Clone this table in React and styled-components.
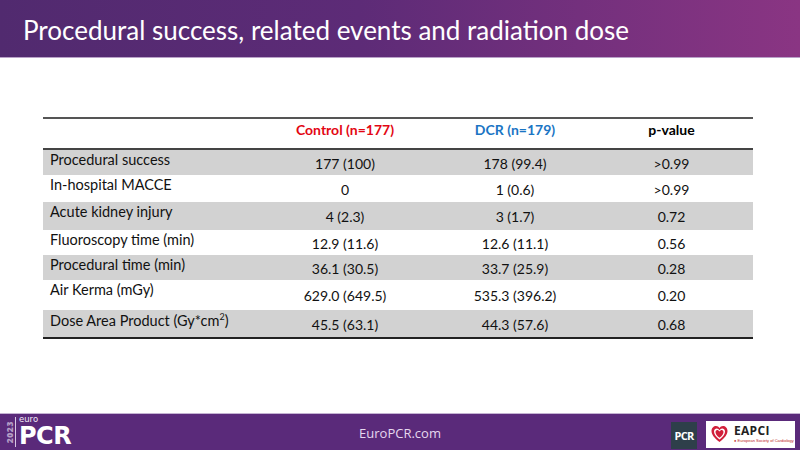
import React from "react";
import styled, { createGlobalStyle } from "styled-components";

const Global = createGlobalStyle`
  html, body { margin: 0; padding: 0; background: #fff; }
  body { width: 800px; height: 450px; overflow: hidden; font-family: Lato, "Open Sans", sans-serif; }
`;

const Slide = styled.div`
  width: 800px;
  height: 450px;
  display: flex;
  flex-direction: column;
  background: #fff;
`;

const Header = styled.header`
  height: 58px;
  flex: none;
  display: flex;
  align-items: center;
  padding-left: 23px;
  background: linear-gradient(90deg, #512a6f 0%, #5d2b77 45%, #8a3583 100%);
  border-bottom: 1px solid #b9a2c8;
  box-sizing: border-box;
`;

const Title = styled.h1`
  margin: 0;
  margin-top: 2px;
  color: #fff;
  font-family: Lato, "Open Sans", sans-serif;
  font-weight: 400;
  font-size: 26px;
`;

const Main = styled.main`
  flex: 1;
  padding: 59px 47px 0 43px;
`;

const Table = styled.div`
  width: 710px;
  border-top: 2px solid #555;
  border-bottom: 2px solid #222;
`;

const Row = styled.div`
  display: grid;
  grid-template-columns: 207px 190px 150px 163px;
  height: ${(p) => p.h}px;
  background: ${(p) => (p.shade ? "#d2d2d2" : "#fff")};
  border-bottom: ${(p) => (p.head ? "2px solid #444" : "none")};
  box-sizing: border-box;
`;

const Label = styled.div`
  padding: 1px 0 0 7px;
  font-size: 14.5px;
  color: #111;
  white-space: nowrap;
`;

const Sup = styled.sup`
  font-size: 9px;
`;

const Cell = styled.div`
  display: flex;
  align-items: center;
  justify-content: center;
  padding-top: 1px;
  font-size: 14px;
  color: #111;
  white-space: nowrap;
`;

const HeadCell = styled(Cell)`
  font-weight: 700;
  color: ${(p) => p.color || "#000"};
  padding-top: 0;
  padding-bottom: 8px;
`;

const Footer = styled.footer`
  height: 37px;
  flex: none;
  background: #5a2a7a;
  border-top: 1px solid #c4b2d2;
  display: grid;
  grid-template-columns: 1fr auto 1fr;
  align-items: center;
  box-sizing: border-box;
`;

const LeftLogo = styled.div`
  display: flex;
  align-items: center;
  padding-left: 4px;
  height: 100%;
`;

const YearBox = styled.div`
  height: 30px;
  width: 11px;
  display: flex;
  align-items: center;
  justify-content: center;
  margin-right: 3px;
  border-right: 1px solid #d8c8e4;
`;

const Year = styled.div`
  writing-mode: vertical-rl;
  transform: rotate(180deg);
  font-family: "Open Sans", sans-serif;
  font-weight: 800;
  font-size: 8.5px;
  letter-spacing: 0.6px;
  color: #b59fc6;
  line-height: 10px;
`;

const Brand = styled.div`
  align-self: flex-start;
  display: flex;
  flex-direction: column;
  color: #fff;
`;

const Euro = styled.span`
  font-family: "DejaVu Sans", sans-serif;
  font-size: 8.5px;
  line-height: 10px;
  color: #f2ebf7;
`;

const PcrBig = styled.span`
  font-family: "DejaVu Sans", sans-serif;
  font-weight: 700;
  font-size: 24px;
  line-height: 25px;
  letter-spacing: -0.5px;
`;

const Site = styled.div`
  color: #e6d8ef;
  font-family: "Open Sans", sans-serif;
  font-size: 13px;
  padding-top: 2px;
`;

const RightLogos = styled.div`
  display: flex;
  justify-content: flex-end;
  align-items: center;
  gap: 9px;
  padding-right: 5px;
`;

const PcrSquare = styled.div`
  width: 26px;
  height: 27px;
  background: #2e3f4a;
  color: #fff;
  display: flex;
  align-items: center;
  justify-content: center;
  font-family: "Open Sans", sans-serif;
  font-weight: 700;
  font-size: 11px;
  letter-spacing: -0.8px;
  margin-top: 6px;
`;

const EapciBox = styled.div`
  width: 89px;
  height: 27px;
  background: #fff;
  display: flex;
  align-items: center;
  padding-left: 5px;
  box-sizing: border-box;
  gap: 6px;
  margin-top: 4px;
`;

const EapciText = styled.div`
  display: flex;
  flex-direction: column;
  line-height: 1;
`;

const EapciName = styled.span`
  font-family: "Open Sans", sans-serif;
  font-weight: 700;
  font-size: 12px;
  color: #222;
  letter-spacing: 0.3px;
`;

const EapciSub = styled.span`
  font-family: "Liberation Sans", sans-serif;
  font-size: 4px;
  color: #b22;
  margin-top: 2px;
  white-space: nowrap;
`;

const rows = [
  ["Procedural success", "177 (100)", "178 (99.4)", ">0.99", 25],
  ["In-hospital MACCE", "0", "1 (0.6)", ">0.99", 27],
  ["Acute kidney injury", "4 (2.3)", "3 (1.7)", "0.72", 28],
  ["Fluoroscopy time (min)", "12.9 (11.6)", "12.6 (11.1)", "0.56", 25],
  ["Procedural time (min)", "36.1 (30.5)", "33.7 (25.9)", "0.28", 25],
  ["Air Kerma (mGy)", "629.0 (649.5)", "535.3 (396.2)", "0.20", 30],
  ["Dose Area Product (Gy*cm", "45.5 (63.1)", "44.3 (57.6)", "0.68", 27, true],
];

function Heart() {
  return (
    <svg width="17" height="18" viewBox="0 0 17 18">
      <path d="M8.5 17 C3 12.5 0.5 9.5 0.5 6 C0.5 3 2.7 1 5 1 C6.6 1 7.8 1.9 8.5 3 C9.2 1.9 10.4 1 12 1 C14.3 1 16.5 3 16.5 6 C16.5 9.5 14 12.5 8.5 17 Z" fill="#d11f3a" />
      <path d="M8.5 14.5 C4.5 11.3 3 9 3 6.6 C3 4.6 4.4 3.4 5.8 3.4 C7 3.4 7.9 4.2 8.5 5.3 C9.1 4.2 10 3.4 11.2 3.4 C12.6 3.4 14 4.6 14 6.6 C14 9 12.5 11.3 8.5 14.5 Z" fill="#fff" />
      <path d="M8.5 12.8 C5.6 10.5 4.5 8.7 4.5 7 C4.5 5.7 5.4 5 6.3 5 C7.2 5 7.9 5.6 8.5 6.5 C9.1 5.6 9.8 5 10.7 5 C11.6 5 12.5 5.7 12.5 7 C12.5 8.7 11.4 10.5 8.5 12.8 Z" fill="#d11f3a" />
    </svg>
  );
}

export default function App() {
  return (
    <>
      <Global />
      <Slide>
        <Header>
          <Title>Procedural success, related events and radiation dose</Title>
        </Header>
        <Main>
          <Table>
            <Row h={31} head>
              <div />
              <HeadCell color="#e30613">Control (n=177)</HeadCell>
              <HeadCell color="#1a75c4">DCR (n=179)</HeadCell>
              <HeadCell>p-value</HeadCell>
            </Row>
            {rows.map(([label, a, b, p, h, sq], i) => (
              <Row key={label} h={h} shade={i % 2 === 0}>
                <Label>
                  {label}
                  {sq && (
                    <>
                      <Sup>2</Sup>)
                    </>
                  )}
                </Label>
                <Cell>{a}</Cell>
                <Cell>{b}</Cell>
                <Cell>{p}</Cell>
              </Row>
            ))}
          </Table>
        </Main>
        <Footer>
          <LeftLogo>
            <YearBox>
              <Year>2023</Year>
            </YearBox>
            <Brand>
              <Euro>euro</Euro>
              <PcrBig>PCR</PcrBig>
            </Brand>
          </LeftLogo>
          <Site>EuroPCR.com</Site>
          <RightLogos>
            <PcrSquare>PCR</PcrSquare>
            <EapciBox>
              <Heart />
              <EapciText>
                <EapciName>EAPCI</EapciName>
                <EapciSub>● European Society of Cardiology</EapciSub>
              </EapciText>
            </EapciBox>
          </RightLogos>
        </Footer>
      </Slide>
    </>
  );
}
